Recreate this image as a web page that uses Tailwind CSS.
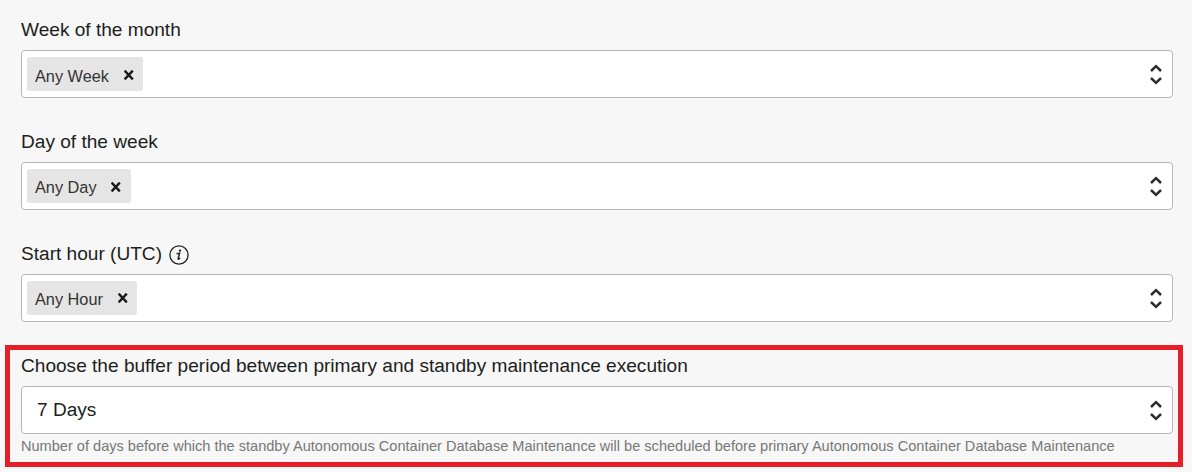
<!DOCTYPE html>
<html lang="en">
<head>
<meta charset="utf-8">
<title>Maintenance schedule</title>
<script src="https://cdn.jsdelivr.net/npm/@tailwindcss/browser@4"></script>
</head>
<body class="relative h-[472px] overflow-hidden bg-[#f7f7f7] pt-[18px] pl-[21px] font-['Liberation_Sans',sans-serif] text-[#201e1c]">
<svg class="hidden">
  <symbol id="sort" viewBox="0 0 14 22"><path d="M2 8 7 3.2 12 8M2 15 7 19.8 12 15" fill="none" stroke="#2b2b2b" stroke-width="2.5"/></symbol>
  <symbol id="x" viewBox="0 0 10 10"><path d="M.6 .6 8.8 9.4M8.8 .6 .6 9.4" fill="none" stroke="#1a1816" stroke-width="2.4"/></symbol>
</svg>
<main class="w-[1152px]">
  <section class="h-28">
    <label class="flex h-8 items-start text-[19.08px] leading-6">Week of the month</label>
    <div class="flex h-12 items-center justify-between rounded-[4px] border border-[#b4b6b8] bg-white pr-[9px] pl-[5px]">
      <span class="flex h-[34px] w-[116px] items-center justify-between rounded-[3px] bg-[#e5e5e5] pr-[9.5px] pl-2 text-[16.3px] text-[#333]"><span class="pt-1">Any Week</span><svg class="mt-px size-2.5"><use href="#x"/></svg></span>
      <svg class="h-[22px] w-3.5"><use href="#sort"/></svg>
    </div>
  </section>
  <section class="h-28">
    <label class="flex h-8 items-start text-[19.08px] leading-6">Day of the week</label>
    <div class="flex h-12 items-center justify-between rounded-[4px] border border-[#b4b6b8] bg-white pr-[9px] pl-[5px]">
      <span class="flex h-[34px] w-[104px] items-center justify-between rounded-[3px] bg-[#e5e5e5] pr-[10.5px] pl-2 text-[16.3px] text-[#333]"><span class="pt-[3px]">Any Day</span><svg class="mt-px size-2.5"><use href="#x"/></svg></span>
      <svg class="h-[22px] w-3.5"><use href="#sort"/></svg>
    </div>
  </section>
  <section class="h-28">
    <label class="flex h-8 items-start text-[19.08px] leading-6">Start hour (UTC)<svg class="mt-[3px] ml-[7px] size-5" viewBox="0 0 20 20"><circle cx="10" cy="10" r="9.1" fill="none" stroke="#222" stroke-width="1.3"/><path d="M7.6 8.8 10.6 8.2 9.1 13.6Q8.9 15 11.3 13" fill="none" stroke="#222" stroke-width="1.5"/><circle cx="11" cy="5.6" r="1.2" fill="#222"/></svg></label>
    <div class="flex h-12 items-center justify-between rounded-[4px] border border-[#b4b6b8] bg-white pr-[9px] pl-[5px]">
      <span class="flex h-[34px] w-[110px] items-center justify-between rounded-[3px] bg-[#e5e5e5] pr-[9.5px] pl-2 text-[16.3px] text-[#333]"><span class="pt-[2px]">Any Hour</span><svg class="size-2.5"><use href="#x"/></svg></span>
      <svg class="h-[22px] w-3.5"><use href="#sort"/></svg>
    </div>
  </section>
  <section>
    <label class="flex h-8 items-start text-[19.08px] leading-6">Choose the buffer period between primary and standby maintenance execution</label>
    <div class="flex h-12 items-center justify-between rounded-[4px] border border-[#b4b6b8] bg-white pr-[9px] pl-[15px] text-[19.08px]">
      <span>7 Days</span>
      <svg class="h-[22px] w-3.5"><use href="#sort"/></svg>
    </div>
    <p class="mt-[2px] text-[14.57px] leading-5 whitespace-nowrap text-[#777]">Number of days before which the standby Autonomous Container Database Maintenance will be scheduled before primary Autonomous Container Database Maintenance</p>
  </section>
</main>
<div class="pointer-events-none absolute top-[345px] left-[5px] h-[122px] w-[1178px] border-[5px] border-[#e61e28]"></div>
</body>
</html>
